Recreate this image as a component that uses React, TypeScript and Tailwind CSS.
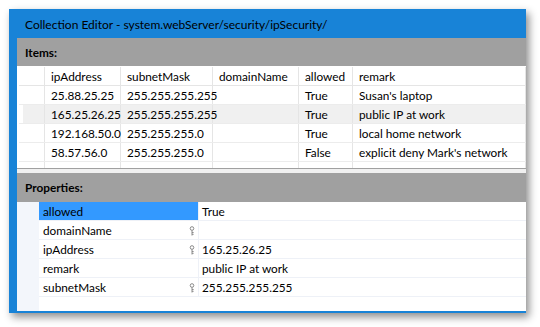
const COLS = [
  { key: "ipAddress", w: 76 },
  { key: "subnetMask", w: 92 },
  { key: "domainName", w: 86 },
  { key: "allowed", w: 54 },
  { key: "remark", w: 173 },
];

const ROWS = [
  { ipAddress: "25.88.25.25", subnetMask: "255.255.255.255", domainName: "", allowed: "True", remark: "Susan's laptop" },
  { ipAddress: "165.25.26.25", subnetMask: "255.255.255.255", domainName: "", allowed: "True", remark: "public IP at work" },
  { ipAddress: "192.168.50.0", subnetMask: "255.255.255.0", domainName: "", allowed: "True", remark: "local home network" },
  { ipAddress: "58.57.56.0", subnetMask: "255.255.255.0", domainName: "", allowed: "False", remark: "explicit deny Mark's network" },
];

const PROPS = [
  { name: "allowed", value: "True", key: false, selected: true },
  { name: "domainName", value: "", key: true },
  { name: "ipAddress", value: "165.25.26.25", key: true },
  { name: "remark", value: "public IP at work", key: false },
  { name: "subnetMask", value: "255.255.255.255", key: true },
];

function KeyIcon() {
  return (
    <svg width="6" height="10" viewBox="0 0 6 10" className="block">
      <circle cx="3" cy="2.5" r="1.8" fill="none" stroke="#8a8a8a" strokeWidth="1" />
      <path d="M3 4.3 V9.5 M3 6.5 H4.6 M3 8.3 H4.6" stroke="#8a8a8a" strokeWidth="1" />
    </svg>
  );
}

export default function App() {
  return (
    <div
      className="w-[540px] h-[327px] bg-white pl-[9px] pt-[9px] text-[11.8px] text-black"
      style={{ fontFamily: 'Lato, "Noto Sans", sans-serif' }}
    >
      <div className="w-[517px] h-[304px] flex flex-col bg-[#1883d7] shadow-[3px_4px_8px_rgba(0,0,0,0.45)]">
        <div className="h-[29px] shrink-0 flex items-center pl-[16px] pt-[2px] text-[12px]">
          Collection Editor - system.webServer/security/ipSecurity/
        </div>
        <div className="flex-1 flex pl-[8px] pb-[2px]">
          <div className="flex-1 flex flex-col bg-white">
            <div className="h-[28px] shrink-0 bg-[#a0a0a0] flex items-center pl-[8px] pt-[1px] font-bold">
              Items:
            </div>
            <div className="h-[103px] shrink-0 pl-[2px] pt-[1px] overflow-hidden border-b border-[#a0a0a0]">
              <div className="flex h-[19px] border-b border-[#e5e5e5]">
                <div className="w-[26px] shrink-0 border-r border-[#e5e5e5]" />
                {COLS.map((c) => (
                  <div
                    key={c.key}
                    className="shrink-0 border-r border-[#e5e5e5] pl-[6px] pt-[1px] flex items-center"
                    style={{ width: c.w }}
                  >
                    {c.key}
                  </div>
                ))}
              </div>
              {[...ROWS, null].map((r, i) => (
                <div key={i} className={`flex h-[19px] border-b border-[#ececec] ${i === 1 ? "bg-[#f0f0f0]" : ""}`}>
                  <div className="w-[26px] shrink-0 border-r border-[#e5e5e5] bg-white">
                    {i === 1 && <div className="ml-[4px] h-full bg-[#f0f0f0]" />}
                  </div>
                  {COLS.map((c) => (
                    <div
                      key={c.key}
                      className="shrink-0 border-r border-[#e5e5e5] pl-[6px] pt-[1px] flex items-center whitespace-nowrap"
                      style={{ width: c.w }}
                    >
                      {r ? (r as Record<string, string>)[c.key] : ""}
                    </div>
                  ))}
                </div>
              ))}
            </div>
            <div className="h-[4px] shrink-0 bg-[#f0f0f0]" />
            <div className="h-[29px] shrink-0 bg-[#a0a0a0] flex items-center pl-[8px] pt-[1px] font-bold">
              Properties:
            </div>
            <div className="flex-1 flex">
              <div className="w-[22px] shrink-0 bg-[#f3f6fb]" />
              <div className="flex-1 flex flex-col">
                {PROPS.map((p) => (
                  <div key={p.name} className="flex h-[19px] border-b border-[#eef1f7]">
                    <div
                      className={`w-[160px] shrink-0 flex items-center pl-[4px] pr-[3px] pt-[1px] border-r border-[#eef1f7] ${p.selected ? "bg-[#3399ff]" : ""}`}
                    >
                      <span className="flex-1">{p.name}</span>
                      {p.key && <KeyIcon />}
                    </div>
                    <div className="flex-1 flex items-center pl-[3px] pt-[1px]">{p.value}</div>
                  </div>
                ))}
              </div>
            </div>
          </div>
        </div>
      </div>
    </div>
  );
}
